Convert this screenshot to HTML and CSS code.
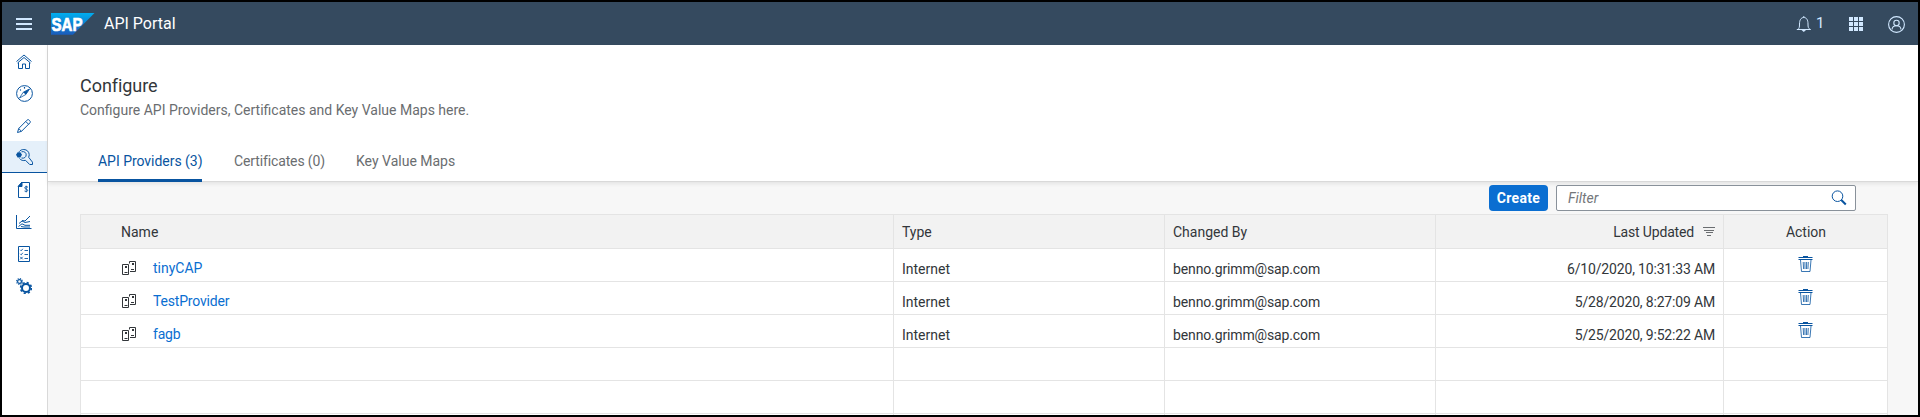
FILE: index.html
```html
<!DOCTYPE html>
<html lang="en">
<head>
<meta charset="utf-8">
<title>API Portal</title>
<link rel="stylesheet" href="styles.css">
</head>
<body>
<svg width="0" height="0" class="sprite">
  <symbol id="system" viewBox="0 0 16 16">
    <path d="M1.500 4.500h6v10h-6zM8.500 3.500v-2h6v10H9" fill="none" stroke="currentColor"/>
    <path d="M4 6h2v2H4zM11 3h2v2h-2zM3.500 12h3v1h-3zM10 9h3v1h-3z" fill="currentColor"/>
  </symbol>
  <symbol id="trash" viewBox="0 0 16 16">
    <path d="M5 0h5v1h4.500v1H.5V1H5zM.5 3h14v1H.5z" fill="currentColor"/>
    <path d="M2.500 4l1 11.500h8.500L13 4M5.200 6l.4 7M6.900 6l.1 7M8.600 6l-.1 7M10.300 6l-.4 7" fill="none" stroke="currentColor" stroke-width=".8"/>
  </symbol>
</svg>
<div class="app">
  <header class="shell">
    <svg class="menu" width="16" height="12" viewBox="0 0 16 12"><path d="M0 1h16M0 6h16M0 11h16" stroke="#d1e8ff" stroke-width="2"/></svg>
    <svg class="logo" width="44" height="22" viewBox="0 0 44 22">
      <defs><linearGradient id="lg" x1="0" y1="0" x2="0" y2="1"><stop offset="0" stop-color="#00aeef"/><stop offset=".5" stop-color="#0d82d3"/><stop offset="1" stop-color="#1a5cbb"/></linearGradient></defs>
      <path d="M0 0h43.500L22 21.800H0z" fill="url(#lg)"/>
      <text x="0.500" y="17.500" textLength="31" lengthAdjust="spacingAndGlyphs" class="logo-text">SAP</text>
    </svg>
    <span class="product">API Portal</span>
    <div class="shell-actions">
      <svg width="16" height="16" viewBox="0 0 16 16" fill="none" stroke="currentColor"><path d="M.8 13.500h14M2 13.200c1.300-1 1.500-2 1.500-5.200C3.500 4 5 1.500 7.800 1.500S12 4 12 8c0 3.200.3 4.200 1.800 5.200M7.800 0v1.500"/><path d="M5.500 14h4.500L7.800 16z" fill="currentColor" stroke="none"/></svg>
      <span class="count">1</span>
      <svg class="apps" width="14" height="14" viewBox="0 0 14 14" fill="currentColor"><path d="M0 0h4v4H0zM5 0h4v4H5zM10 0h4v4h-4zM0 5h4v4H0zM5 5h4v4H5zM10 5h4v4h-4zM0 10h4v4H0zM5 10h4v4H5zM10 10h4v4h-4z"/></svg>
      <svg class="user" width="17" height="17" viewBox="0 0 17 17" fill="none" stroke="currentColor" stroke-width="1.100"><circle cx="8.500" cy="8.500" r="7.900"/><circle cx="8.500" cy="7" r="2.700"/><path d="M4 13.500c.2-2.500 1.800-3.800 4.500-3.800s4.300 1.300 4.500 3.800"/></svg>
    </div>
  </header>
  <div class="body">
    <nav class="side">
      <a><svg width="16" height="16" viewBox="0 0 16 16"><path d="M.5 7.500L8 1l7.500 6.500M1.500 9L8 3.500 14.500 9M2.500 8.500v6h4V10h3v4.500h4v-6"/></svg></a>
      <a><svg width="17" height="17" viewBox="0 0 17 17"><circle cx="8.500" cy="8.500" r="7.900"/><path d="M13.500 4L9.800 9.500 3.500 13 7.200 7.300z" stroke-width=".8"/><path d="M13.500 4L9.800 9.500 7.200 7.300zM8 2h1v1.500H8zM4 4.500h1v1H4z" class="fill" stroke-width=".2"/></svg></a>
      <a><svg width="16" height="16" viewBox="0 0 16 16"><path d="M1.500 14.500l1.200-4L11 2.200c.8-.8 1.500-.8 2.200 0l.6.600c.7.700.7 1.400 0 2.200L5.500 13.300zM9.800 3.500l2.800 2.800M2.700 10.500l2.800 2.800"/></svg></a>
      <a class="on"><svg width="17" height="17" viewBox="0 0 17 17"><path d="M3 2.800C4.200 1.200 6 .5 7.800.5c3.200 0 5.400 2.500 5.400 5.200 0 1-.2 1.700-.6 2.500l3.900 5v2.300h-2.800l-4.200-4.200c-2.300.7-4.600 0-6-1.800"/><path d="M5.500 2.800c2.700-.8 4.700.8 4.700 3s-2 4-4.700 3.200"/><path d="M1.600 3.200h2.800L6 5.800 4.400 8.500H1.600L0 5.800z" class="fill" stroke="none"/></svg></a>
      <a><svg width="16" height="16" viewBox="0 0 16 16"><path d="M6 .5h7.500v15h-11V4.500z"/><path d="M2 4.500L6 0v4.500z" class="fill"/><path d="M12 5.300C10.500 4 8.500 4.800 8.700 6s3 1 3 2.300-1.900 1.700-3.200.7M10.200 3.700v6.600" stroke-width=".9"/></svg></a>
      <a><svg width="16" height="16" viewBox="0 0 16 16"><path d="M.5 1v13.500h15M2.500 12.500L6 9.800l3 1.500h5M3 9.500l3-2.500 3 1.500 5-1M6 6.500l3 .5 5-5M5 12.500l3 .5h6"/></svg></a>
      <a><svg width="16" height="16" viewBox="0 0 16 16"><path d="M2.500.5h11v15h-11z"/><path d="M4.200 3.800l1 1 1.600-2M4.200 7.800l1 1 1.600-2M4.200 10.800l2.500 2.500M6.700 10.800l-2.500 2.500M8.500 4.500H12M8.500 8.500H12M8.500 12.500H12" stroke-width=".9"/></svg></a>
      <a><svg width="16" height="16" viewBox="0 0 16 16"><circle cx="3.500" cy="3.500" r="1.900" stroke-width="1.200"/><circle cx="3.500" cy="3.500" r="2.900" stroke-width="1.100" stroke-dasharray="1.200 1.078"/><circle cx="10" cy="10" r="4" stroke-width="2"/><circle cx="10" cy="10" r="5.400" stroke-width="1.600" stroke-dasharray="2.200 2.041"/></svg></a>
    </nav>
    <main class="main">
      <section class="head">
        <h1>Configure</h1>
        <p>Configure API Providers, Certificates and Key Value Maps here.</p>
        <div class="tabs">
          <a class="tab active">API Providers (3)</a>
          <a class="tab cert">Certificates (0)</a>
          <a class="tab kvm">Key Value Maps</a>
        </div>
      </section>
      <div class="toolbar">
        <button class="create">Create</button>
        <div class="filter"><span>Filter</span>
          <svg width="16" height="16" viewBox="0 0 16 16" fill="none" stroke="#0854a0"><circle cx="6.500" cy="6.200" r="5.300"/><path d="M10.300 10l4.500 4.500" stroke-width="2"/></svg>
        </div>
      </div>
      <div class="grid">
        <div class="row th"><div>Name</div><div>Type</div><div>Changed By</div><div class="date"><span class="updated">Last Updated</span><svg class="sort" width="12" height="9" viewBox="0 0 12 9"><path d="M0 .5h12M1 3.500h10M3 5.500h7M4 8.500h4" stroke="#6a6d70"/></svg></div><div class="act"><span>Action</span></div></div>
        <div class="row"><div class="name"><svg width="16" height="16"><use href="#system"/></svg><a>tinyCAP</a></div><div>Internet</div><div class="mail">benno.grimm@sap.com</div><div class="date"><span>6/10/2020, 10:31:33 AM</span></div><div class="act"><svg width="16" height="16"><use href="#trash"/></svg></div></div>
        <div class="row"><div class="name"><svg width="16" height="16"><use href="#system"/></svg><a class="tight">TestProvider</a></div><div>Internet</div><div class="mail">benno.grimm@sap.com</div><div class="date"><span>5/28/2020, 8:27:09 AM</span></div><div class="act"><svg width="16" height="16"><use href="#trash"/></svg></div></div>
        <div class="row"><div class="name"><svg width="16" height="16"><use href="#system"/></svg><a class="tight">fagb</a></div><div>Internet</div><div class="mail">benno.grimm@sap.com</div><div class="date"><span>5/25/2020, 9:52:22 AM</span></div><div class="act"><svg width="16" height="16"><use href="#trash"/></svg></div></div>
        <div class="row"><div></div><div></div><div></div><div></div><div></div></div>
        <div class="row"><div></div><div></div><div></div><div></div><div></div></div>
        <div class="row"><div></div><div></div><div></div><div></div><div></div></div>
      </div>
    </main>
  </div>
</div>
</body>
</html>
```
FILE: styles.css
```css
* { box-sizing: border-box; }
body { margin: 0; font-family: Roboto, "Liberation Sans", sans-serif; font-size: 14px; color: #32363a; }
.sprite { position: absolute; }
.app { width: 1920px; height: 417px; border: 2px solid #000; overflow: hidden; display: flex; flex-direction: column; background: #f7f7f7; }
.shell { height: 43px; flex: none; background: #354a5f; display: flex; align-items: center; color: #d1e8ff; padding-left: 14px; }
.menu { margin-top: 1px; }
.logo { margin: 0 0 0 19px; }
.logo-text { font: bold 18.5px "Liberation Sans", sans-serif; fill: #fff; stroke: #fff; stroke-width: .7px; }
.product { margin-left: 9px; font-size: 16px; color: #fff; line-height: 20px; }
.shell-actions { margin-left: auto; display: flex; align-items: center; padding-right: 13px; }
.count { margin: -2px 0 0 4px; font-size: 15px; width: 10px; }
.apps { margin: 1px 0 0 23px; }
.user { margin: 1px 0 0 25px; }
.body { flex: 1; display: flex; min-height: 0; }
.side { width: 46px; flex: none; background: #fff; border-right: 1px solid #d9d9d9; display: flex; flex-direction: column; }
.side a { height: 32px; flex: none; display: flex; align-items: center; padding: 1px 0 0 14px; }
.side a.on { background: #e5f0fa; border-bottom: 1px solid #0854a0; }
.side svg { fill: none; stroke: #0854a0; stroke-width: 1; }
.side .fill { fill: #0854a0; }
.main { flex: 1; min-width: 0; display: flex; flex-direction: column; }
.head { height: 137px; flex: none; background: #fff; border-bottom: 1px solid #d9d9d9; box-shadow: 0 2px 4px rgba(0,0,0,.08); padding: 29px 0 0 32px; display: flex; flex-direction: column; }
h1 { margin: 0; font-size: 18px; font-weight: 400; line-height: 24px; letter-spacing: -.05px; }
p { margin: 3px 0 0; line-height: 18px; color: #6a6d70; }
.tabs { display: flex; margin-top: auto; margin-bottom: -1px; padding-left: 18px; }
.tab { height: 32px; line-height: 22px; color: #6a6d70; white-space: nowrap; }
.active { width: 104px; margin-right: 32px; color: #0854a0; border-bottom: 3px solid #0854a0; border-radius: 2px 2px 0 0; letter-spacing: -.03px; }
.cert { width: 91px; margin-right: 31px; letter-spacing: -.13px; }
.toolbar { height: 32px; flex: none; display: flex; justify-content: flex-end; padding: 3px 62px 0 0; }
.create { width: 59px; height: 26px; border: 0; border-radius: 4px; background: #0a6ed1; color: #fff; font: bold 14px Roboto, sans-serif; letter-spacing: .3px; padding: 0; margin-right: 8px; }
.filter { width: 300px; height: 26px; border: 1px solid #89919a; border-radius: 2px; background: #fff; display: flex; align-items: center; justify-content: space-between; padding: 0 8px 0 11px; font-style: italic; color: #74777a; }
.grid { width: 1808px; flex: none; margin-left: 32px; border: solid #e4e4e4; border-width: 1px 1px 0 0; background: #fff; }
.row { height: 33px; display: grid; grid-template-columns: 813px 271px 271px 288px 164px; border-bottom: 1px solid #e4e4e4; line-height: 20px; }
.row > div { border-left: 1px solid #e4e4e4; padding: 10px 8px 0; white-space: nowrap; }
.row.th { height: 34px; background: #f2f2f2; }
.row.th > div { padding-top: 7px; }
.row.th > div:first-child { padding-left: 40px; }
.row > .name { display: flex; padding: 9px 0 0 40px; }
.name svg { margin-top: 2px; flex: none; }
.name a { margin-left: 16px; color: #0a6ed1; }
.name .tight { letter-spacing: -.18px; }
.mail { letter-spacing: -.13px; }
.date { display: flex; justify-content: flex-end; letter-spacing: -.17px; }
.sort { margin: 5px 0 0 9px; }
.row > .act { display: flex; justify-content: center; align-items: flex-start; padding: 7px 7px 0 8px; color: #0854a0; }
.th > .act span { color: #32363a; }
```
